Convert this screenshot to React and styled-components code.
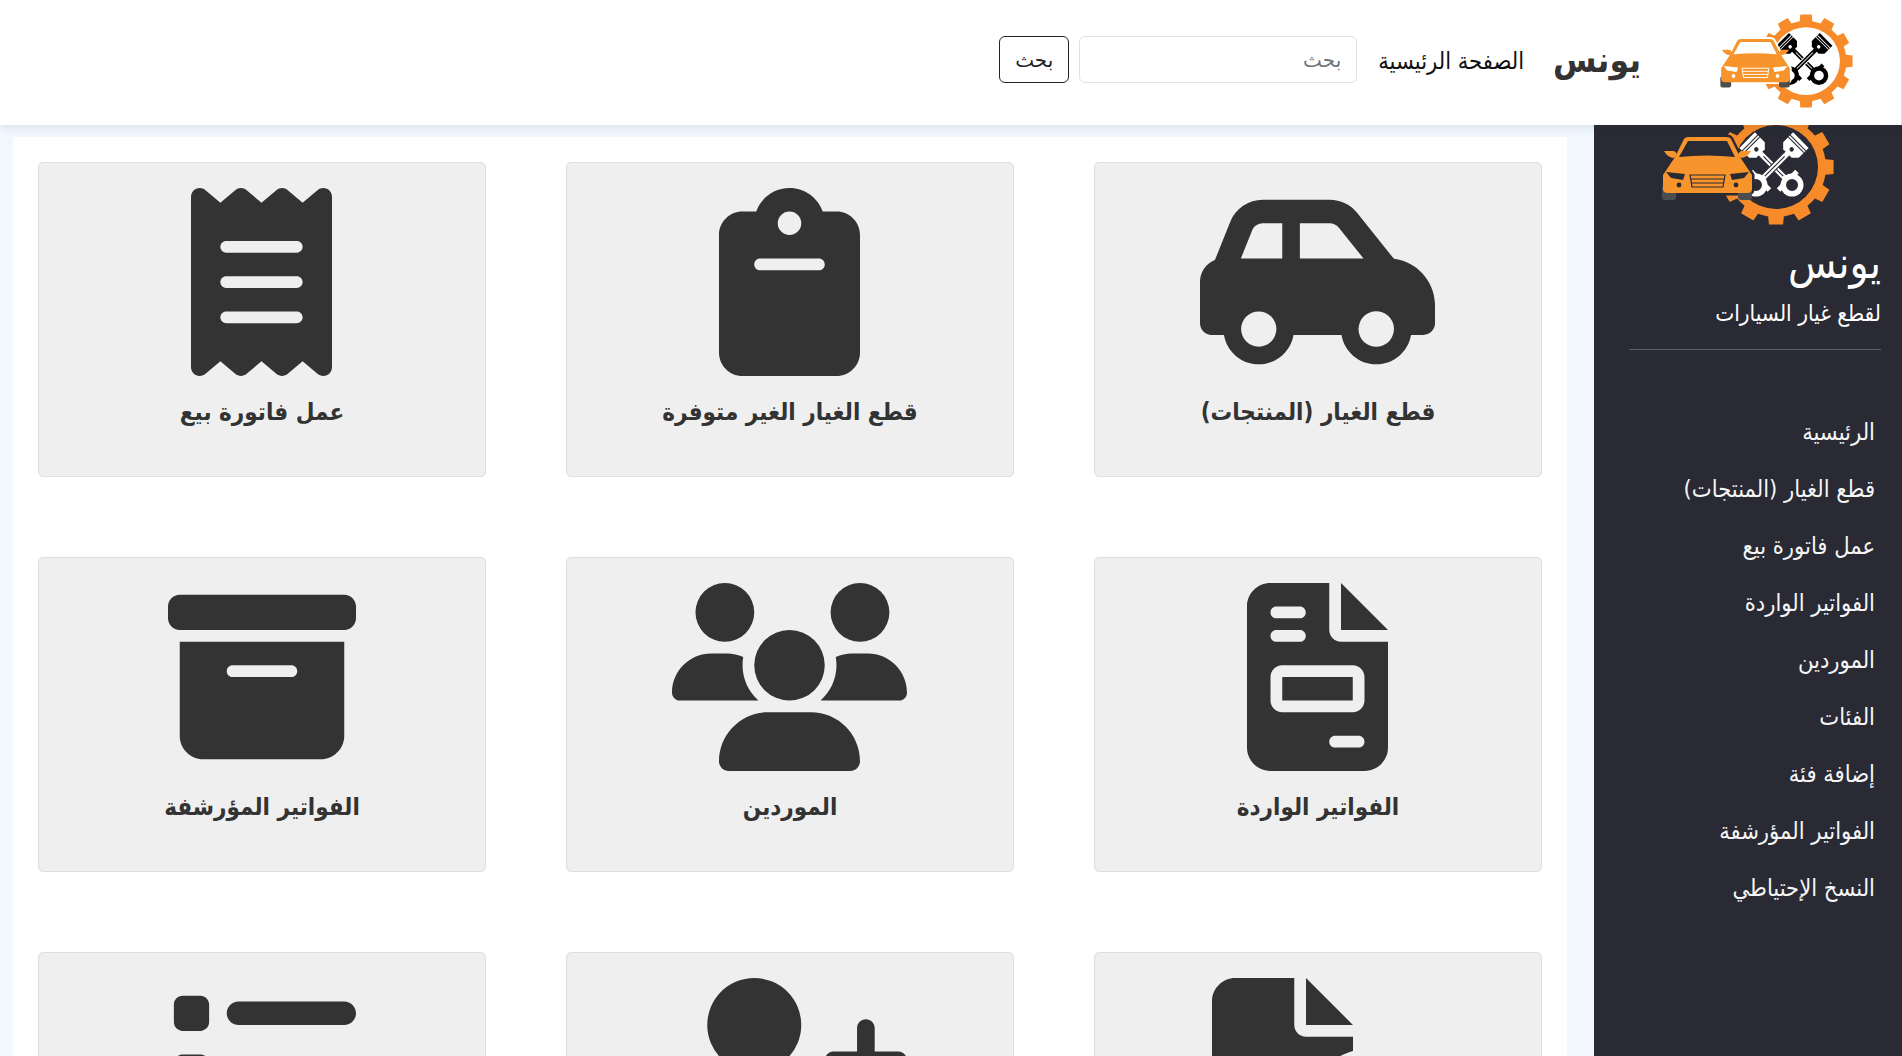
import styled, { createGlobalStyle } from 'styled-components';
import {
  FaCarSide,
  FaClipboard,
  FaReceipt,
  FaFileInvoice,
  FaUsers,
  FaBoxArchive,
  FaFileCirclePlus,
  FaUserPlus,
  FaList,
} from 'react-icons/fa6';

const GlobalStyle = createGlobalStyle`
  html, body {
    margin: 0;
    height: 100%;
    overflow: hidden;
    background: #f1f7fd;
    font-family: "DejaVu Sans Condensed", "DejaVu Sans", sans-serif;
  }
  * { box-sizing: border-box; }
`;

const Page = styled.div`
  height: 100vh;
  display: flex;
  flex-direction: column;
  overflow: hidden;
`;

const Header = styled.header`
  position: relative;
  z-index: 2;
  height: 125px;
  flex: none;
  background: #fff;
  display: flex;
  align-items: center;
  padding: 0 43px 6px 0;
  border-right: 1px solid #dcdcdc;
  box-shadow: 0 3px 8px rgba(30, 50, 80, 0.1);
`;

const HeaderLogo = styled.div`
  width: 150px;
  height: 101px;
  flex: none;
  margin-top: 4px;
`;

const Brand = styled.a`
  margin-right: 67px;
  margin-left: 29px;
  font-size: 35px;
  font-weight: 700;
  color: #333;
  line-height: 1;
  margin-top: 2px;
`;

const HomeLink = styled.a`
  font-size: 23.5px;
  color: #111;
  margin-left: 21px;
  margin-top: 2px;
  white-space: nowrap;
`;

const SearchInput = styled.input`
  width: 278px;
  height: 47px;
  border: 1px solid #dee2e6;
  border-radius: 6px;
  padding: 0 15px;
  font-family: "DejaVu Sans", sans-serif;
  font-size: 20px;
  outline: none;
  &::placeholder { color: #6f7479; }
`;

const SearchButton = styled.button`
  width: 70px;
  height: 47px;
  margin-right: 10px;
  background: #fff;
  border: 1px solid #212529;
  border-radius: 6px;
  font-family: "DejaVu Sans", sans-serif;
  font-size: 20px;
  color: #212529;
`;

const Body = styled.div`
  flex: 1;
  min-height: 0;
  display: flex;
`;

const Sidebar = styled.aside`
  width: 308px;
  flex: none;
  background: #292a33;
  color: #fff;
  padding-left: 35px;
`;

const SideLogo = styled.div`
  margin-top: -20px;
  margin-right: 62px;
  height: 125px;
  width: 185px;
`;

const SideTitle = styled.h1`
  margin: 11px 21px 0 0;
  font-size: 44px;
  font-weight: 400;
  line-height: 44px;
`;

const SideSubtitle = styled.p`
  margin: 12px 21px 0 0;
  font-size: 22.5px;
  line-height: 32px;
`;

const SideRule = styled.hr`
  margin: 20px 21px 0 0;
  border: 0;
  border-top: 1px solid #5c5d65;
`;

const SideNav = styled.nav`
  margin-top: 82px;
  margin-right: 27px;
  display: flex;
  flex-direction: column;
  gap: 57px;
`;

const SideLink = styled.a`
  font-size: 23.5px;
  line-height: 0;
  height: 0;
  color: #f5f6f8;
  white-space: nowrap;
`;

const Main = styled.main`
  flex: 1;
  min-width: 0;
  margin: 12px 27px 0 13px;
  padding: 25px;
  background: #fff;
  overflow: hidden;
`;

const CardGrid = styled.div`
  display: grid;
  grid-template-columns: repeat(3, 448px);
  grid-auto-rows: 315px;
  gap: 80px;
`;

const Card = styled.a`
  display: flex;
  flex-direction: column;
  align-items: center;
  padding-top: 25px;
  background: #efefef;
  border: 1px solid #dfdfdf;
  border-radius: 5px;
  color: #333;
  svg {
    height: 188px;
    width: ${({ $units }) => ($units * 188) / 512}px;
    margin-right: 1px;
    flex: none;
  }
`;

const CardLabel = styled.span`
  margin-top: 17px;
  font-size: 24px;
  font-weight: 700;
  line-height: 38px;
`;

const gearPath = () => {
  const cx = 121;
  const cy = 62;
  const teeth = 12;
  const point = (r, deg) => {
    const a = (deg * Math.PI) / 180;
    return `${(cx + r * Math.cos(a)).toFixed(2)} ${(cy + r * Math.sin(a)).toFixed(2)}`;
  };
  let d = '';
  for (let i = 0; i < teeth; i++) {
    const c = (i * 360) / teeth;
    d += `${i === 0 ? 'M' : 'L'}${point(50, c - 9)}L${point(58, c - 7)}L${point(58, c + 7)}L${point(50, c + 9)}`;
    d += `A50 50 0 0 1 ${point(50, c + 21)}`;
  }
  return `${d}Z M${cx - 42} ${cy}a42 42 0 1 0 84 0a42 42 0 1 0 -84 0Z`;
};

function Piston({ color, bg, angle }) {
  return (
    <g transform={`translate(119 62) rotate(${angle})`} fill={color}>
      <rect x="-3.2" y="-21" width="6.4" height="39" stroke={bg} strokeWidth="1.2" />
      <rect x="-0.6" y="-15" width="1.2" height="28" fill={bg} />
      <path d="M-11 -38h22v14l-5 5h-12l-5 -5z" />
      <rect x="-11" y="-34.5" width="22" height="1.1" fill={bg} />
      <rect x="-11" y="-31.8" width="22" height="1.1" fill={bg} />
      <circle cx="0" cy="-25" r="2.2" fill={bg} />
      <circle cx="0" cy="25.5" r="11.5" />
      <rect x="-13" y="17" width="26" height="5" />
      <circle cx="0" cy="25.5" r="6" fill={bg} />
    </g>
  );
}

const carBody =
  'M8 70 L20 52 L29 34 Q30 32 34 32 H71 Q75 32 76 34 L85 52 L97 70 V84 Q97 88 92 88 H13 Q8 88 8 84 Z';

function Logo({ bg, car }) {
  const orange = '#f7952c';
  const steel = bg === '#fff' ? '#000' : '#fff';
  return (
    <svg width="100%" height="100%" viewBox="0 0 185 125">
      <path d={gearPath()} fill="#f78b29" fillRule="evenodd" />
      <Piston color={steel} bg={bg} angle={-45} />
      <Piston color={steel} bg={bg} angle={45} />
      <g transform={car}>
        <path d={carBody} fill={bg} stroke={bg} strokeWidth="5" />
        <rect x="7" y="80" width="14" height="15" rx="3" fill="#4b4e4e" />
        <rect x="83" y="80" width="14" height="15" rx="3" fill="#4b4e4e" />
        <path d={carBody} fill={orange} />
        <path d="M9 46 H18 Q21 46 22 50 L19 53 Q13 53 9 46Z" fill={orange} />
        <path d="M96 46 H87 Q84 46 83 50 L86 53 Q92 53 96 46Z" fill={orange} />
        <path d="M33 36 H72 L80 52 Q52 49 24 52 Z" fill={bg} />
        <path d="M11 67 L30 69 L28 75 L16 73 Z" fill={bg} />
        <path d="M94 67 L75 69 L77 75 L89 73 Z" fill={bg} />
        <g fill="none" stroke={bg} strokeWidth="1.2">
          <path d="M35 70 H70 L68 82 H37 Z" />
          <path d="M36 74 H69 M36.5 78 H68.5" />
        </g>
        <circle cx="24" cy="80" r="2.4" fill={bg} />
        <circle cx="81" cy="80" r="2.4" fill={bg} />
      </g>
    </svg>
  );
}

const sideLinks = [
  'الرئيسية',
  'قطع الغيار (المنتجات)',
  'عمل فاتورة بيع',
  'الفواتير الواردة',
  'الموردين',
  'الفئات',
  'إضافة فئة',
  'الفواتير المؤرشفة',
  'النسخ الإحتياطي',
];

// the labels of the third row lie below the fold
const cards = [
  { id: 'parts', label: 'قطع الغيار (المنتجات)', Icon: FaCarSide, units: 640 },
  { id: 'missing', label: 'قطع الغيار الغير متوفرة', Icon: FaClipboard, units: 384 },
  { id: 'sale', label: 'عمل فاتورة بيع', Icon: FaReceipt, units: 384 },
  { id: 'incoming', label: 'الفواتير الواردة', Icon: FaFileInvoice, units: 384 },
  { id: 'suppliers', label: 'الموردين', Icon: FaUsers, units: 640 },
  { id: 'archive', label: 'الفواتير المؤرشفة', Icon: FaBoxArchive, units: 512 },
  { id: 'new-file', Icon: FaFileCirclePlus, units: 576 },
  { id: 'new-user', Icon: FaUserPlus, units: 640 },
  { id: 'list', Icon: FaList, units: 512 },
];

export default function App() {
  return (
    <Page dir="rtl">
      <GlobalStyle />
      <Header>
        <HeaderLogo>
          <Logo bg="#fff" car="translate(8.3 4) scale(0.955)" />
        </HeaderLogo>
        <Brand>يونس</Brand>
        <HomeLink>الصفحة الرئيسية</HomeLink>
        <SearchInput placeholder="بحث" />
        <SearchButton type="button">بحث</SearchButton>
      </Header>
      <Body>
        <Sidebar>
          <SideLogo>
            <Logo bg="#292a33" />
          </SideLogo>
          <SideTitle>يونس</SideTitle>
          <SideSubtitle>لقطع غيار السيارات</SideSubtitle>
          <SideRule />
          <SideNav>
            {sideLinks.map((link) => (
              <SideLink key={link}>{link}</SideLink>
            ))}
          </SideNav>
        </Sidebar>
        <Main>
          <CardGrid>
            {cards.map(({ id, label, Icon, units }) => (
              <Card key={id} $units={units}>
                <Icon />
                {label && <CardLabel>{label}</CardLabel>}
              </Card>
            ))}
          </CardGrid>
        </Main>
      </Body>
    </Page>
  );
}
